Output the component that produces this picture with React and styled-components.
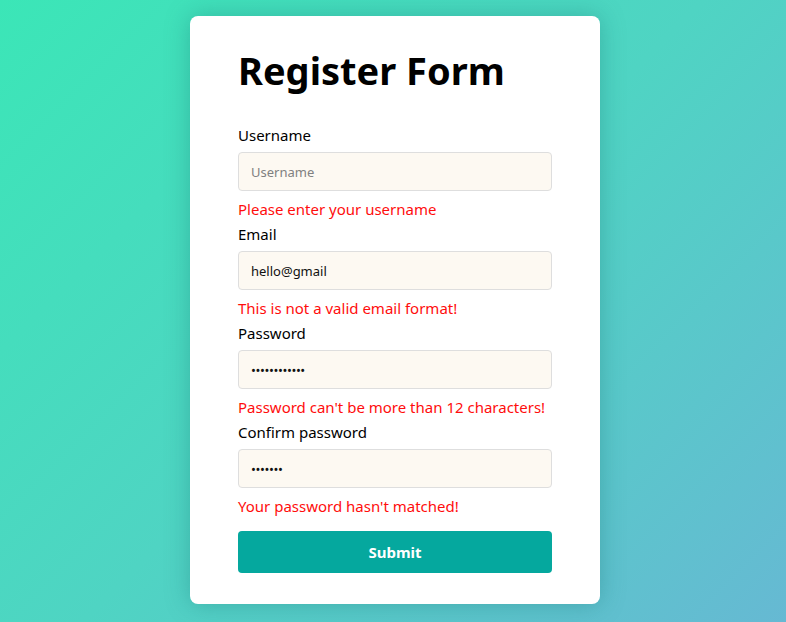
import React from "react";
import styled, { createGlobalStyle } from "styled-components";

const GlobalStyle = createGlobalStyle`
  html, body {
    margin: 0;
    padding: 0;
  }
  body {
    font-family: "Noto Sans", "Open Sans", sans-serif;
    background: linear-gradient(135deg, #3be6b7 0%, #4fd4c3 50%, #66b9d3 100%);
    min-height: 622px;
  }
`;

const Page = styled.div`
  display: flex;
  justify-content: center;
  padding: 16px 0 18px 4px;
  min-height: 622px;
  box-sizing: border-box;
`;

const Card = styled.form`
  width: 410px;
  box-sizing: border-box;
  background: #fff;
  border-radius: 8px;
  box-shadow: 0 0 24px rgba(20, 110, 110, 0.35);
  padding: 28px 48px 31px;
  display: flex;
  flex-direction: column;
`;

const Title = styled.h1`
  margin: 0 0 27px;
  font-size: 38px;
  line-height: 52px;
  font-weight: 700;
  color: #000;
`;

const Field = styled.div`
  display: flex;
  flex-direction: column;
  margin-bottom: 1px;
`;

const Label = styled.label`
  font-size: 15px;
  line-height: 24px;
  color: #000;
  margin-bottom: 5px;
`;

const Input = styled.input`
  height: 39px;
  box-sizing: border-box;
  border: 1px solid #dedede;
  border-radius: 4px;
  background: #fdf9f2;
  padding: 0 12px;
  font-family: inherit;
  font-size: 13px;
  color: #111;
  outline: none;
  letter-spacing: ${(p) => (p.type === "password" ? "-0.4px" : "0")};

  &::placeholder {
    color: #808080;
  }
`;

const Error = styled.div`
  margin-top: 6px;
  font-size: 15px;
  line-height: 24px;
  color: #ff0d0d;
  white-space: nowrap;
`;

const Submit = styled.button`
  margin-top: 12px;
  height: 42px;
  border: none;
  border-radius: 4px;
  background: #05a89e;
  color: #fff;
  font-family: inherit;
  font-size: 15px;
  font-weight: 700;
  cursor: pointer;
`;

const fields = [
  { label: "Username", type: "text", placeholder: "Username", value: "", error: "Please enter your username" },
  { label: "Email", type: "text", placeholder: "Email", value: "hello@gmail", error: "This is not a valid email format!" },
  { label: "Password", type: "password", placeholder: "Password", value: "abcdefghijkl", error: "Password can't be more than 12 characters!" },
  { label: "Confirm password", type: "password", placeholder: "Confirm password", value: "abcdefg", error: "Your password hasn't matched!" },
];

export default function App() {
  return (
    <>
      <GlobalStyle />
      <Page>
        <Card onSubmit={(e) => e.preventDefault()}>
          <Title>Register Form</Title>
          {fields.map((f) => (
            <Field key={f.label}>
              <Label>{f.label}</Label>
              <Input type={f.type} placeholder={f.placeholder} defaultValue={f.value} />
              <Error>{f.error}</Error>
            </Field>
          ))}
          <Submit type="submit">Submit</Submit>
        </Card>
      </Page>
    </>
  );
}
